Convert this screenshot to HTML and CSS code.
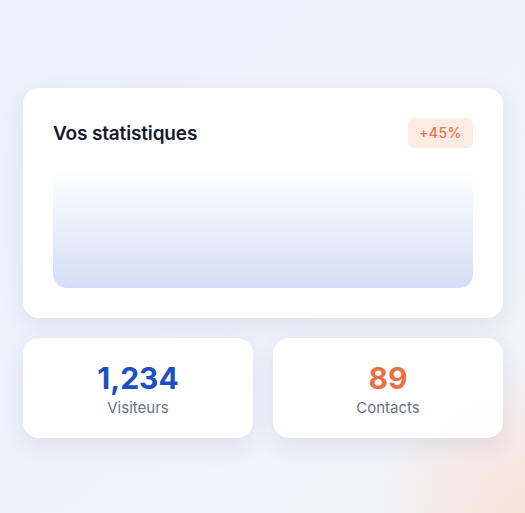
FILE: index.html
```html
<!DOCTYPE html>
<html lang="fr">

<head>
  <meta charset="UTF-8" />
  <meta name="viewport" content="width=device-width, initial-scale=1.0" />
  <title>Statistiques</title>
  <link rel="stylesheet" href="styles.css">
</head>

<body>
  <div class="wrap">
    <article class="statCard">
      <div class="statHead">
        <h2>Vos statistiques</h2>
        <span class="badge">+45%</span>
      </div>
      <div class="chart"></div>
    </article>

    <div class="miniRow">
      <div class="mini">
        <strong class="blue">1,234</strong>
        <span>Visiteurs</span>
      </div>
      <div class="mini">
        <strong class="orange">89</strong>
        <span>Contacts</span>
      </div>
    </div>
  </div>
</body>

</html>
```

FILE: styles.css
```css
* {
  margin: 0;
  padding: 0;
  box-sizing: border-box;
}

body {
  min-height: 100vh;
  font-family: "Inter", "Noto Sans", sans-serif;
  background:
    radial-gradient(circle at 100% 100%, rgba(251, 222, 210, 0.85) 0, rgba(251, 222, 210, 0) 150px),
    linear-gradient(135deg, #eaf2fc 0%, #f0f1fb 35%, #f0f3fa 70%, #f2f3f6 100%);
}

.wrap {
  padding: 88px 22px 0 23px;
  display: flex;
  flex-direction: column;
  gap: 20px;
}

/* main card */
.statCard {
  background-color: #fff;
  border-radius: 16px;
  padding: 30px;
  box-shadow: 0 8px 24px rgba(30, 41, 80, 0.08);
}

.statHead {
  display: flex;
  justify-content: space-between;
  align-items: center;
  height: 30px;
  margin-bottom: 20px;
}

.statHead h2 {
  font-size: 19px;
  font-weight: 600;
  letter-spacing: -0.15px;
  color: #161a2c;
}

.badge {
  background-color: #fdebe4;
  color: #ec7146;
  font-size: 14px;
  font-weight: 500;
  letter-spacing: 0.5px;
  padding: 0 11px;
  height: 30px;
  line-height: 30px;
  border-radius: 6px;
}

.chart {
  height: 120px;
  border-radius: 14px;
  background: linear-gradient(180deg, #ffffff 0%, #eef2fb 40%, #d3ddf5 100%);
}

/* small cards */
.miniRow {
  display: grid;
  grid-template-columns: 1fr 1fr;
  gap: 20px;
}

.mini {
  height: 100px;
  background-color: rgba(255, 255, 255, 0.94);
  border-radius: 16px;
  box-shadow: 0 8px 24px rgba(30, 41, 80, 0.09);
  display: flex;
  flex-direction: column;
  align-items: center;
  justify-content: center;
  gap: 2px;
  padding-top: 2px;
}

.mini strong {
  font-size: 30px;
  font-weight: 700;
  line-height: 36px;
}

.mini span {
  font-size: 15px;
  line-height: 20px;
  color: #6b7280;
}

.blue {
  color: #1d4fc4;
}

.orange {
  color: #ea7146;
}
```
